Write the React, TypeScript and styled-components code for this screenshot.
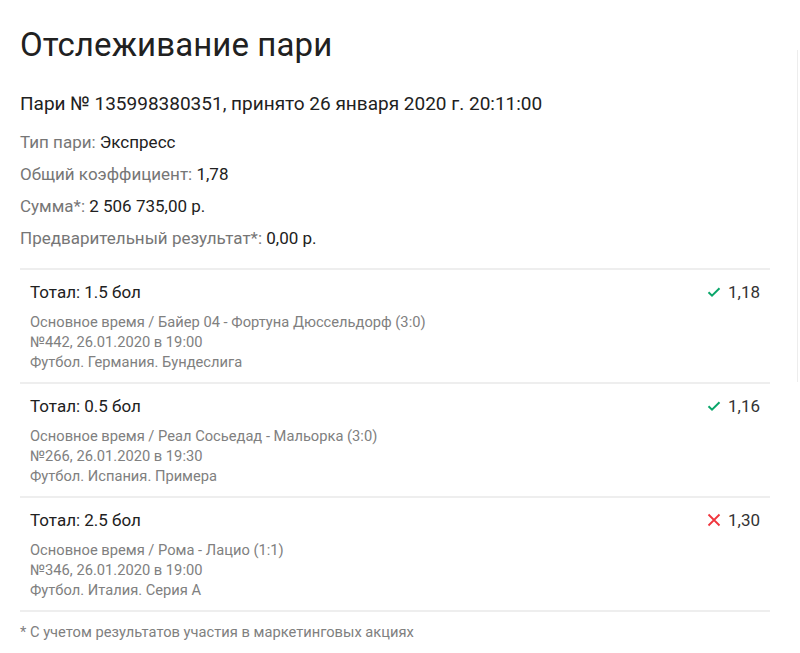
import styled, { createGlobalStyle } from 'styled-components'

const GlobalStyle = createGlobalStyle`
  body {
    margin: 0;
    background: #fff;
    font-family: Roboto, "Noto Sans", Arial, sans-serif;
    color: #212121;
  }
`

const Page = styled.div`
  display: flex;
  width: 800px;
  height: 653px;
  overflow: hidden;
`

const Content = styled.div`
  width: 752px;
  padding: 20px 0 0 20px;
`

const ScrollTrack = styled.div`
  width: 2px;
  margin: 50px 0 0 27px;
  height: 332px;
  border-left: 1px solid #ededed;
`

const Title = styled.h1`
  margin: 0;
  font-size: 33px;
  font-weight: 400;
  line-height: 50px;
  letter-spacing: 0.1px;
`

const BetNumber = styled.div`
  margin-top: 22px;
  font-size: 19px;
  line-height: 24px;
`

const Info = styled.div`
  margin-top: 10px;
  margin-bottom: 14px;
`

const InfoRow = styled.div`
  font-size: 17px;
  line-height: 32px;
  color: #212121;
`

const Label = styled.span`
  color: #767676;
`

const Event = styled.div`
  border-top: 2px solid #eee;
  padding: 10px;
`

const EventHead = styled.div`
  display: flex;
  justify-content: space-between;
  align-items: center;
`

const Market = styled.div`
  font-size: 17px;
  line-height: 24px;
`

const Odds = styled.div`
  display: flex;
  align-items: center;
  gap: 7px;
  font-size: 17px;
  line-height: 24px;
  color: #333;
`

const Details = styled.div`
  margin-top: 8px;
  font-size: 14.7px;
  line-height: 20px;
  color: #808080;
`

const Footnote = styled.div`
  border-top: 2px solid #eee;
  padding-top: 10px;
  font-size: 14.7px;
  line-height: 20px;
  color: #808080;
`

const Check = () => (
  <svg width="14" height="14" viewBox="0 0 14 14">
    <path d="M1.5 7.2 L5 10.6 L12.5 3.2" fill="none" stroke="#0aa66a" strokeWidth="2" />
  </svg>
)

const Cross = () => (
  <svg width="14" height="14" viewBox="0 0 14 14">
    <path d="M1.5 1.5 L12.5 12.5 M12.5 1.5 L1.5 12.5" fill="none" stroke="#f0353d" strokeWidth="1.8" />
  </svg>
)

type Outcome = {
  market: string
  odds: string
  won: boolean
  match: string
  when: string
  league: string
}

const outcomes: Outcome[] = [
  {
    market: 'Тотал: 1.5 бол',
    odds: '1,18',
    won: true,
    match: 'Основное время / Байер 04 - Фортуна Дюссельдорф (3:0)',
    when: '№442, 26.01.2020 в 19:00',
    league: 'Футбол. Германия. Бундеслига',
  },
  {
    market: 'Тотал: 0.5 бол',
    odds: '1,16',
    won: true,
    match: 'Основное время / Реал Сосьедад - Мальорка (3:0)',
    when: '№266, 26.01.2020 в 19:30',
    league: 'Футбол. Испания. Примера',
  },
  {
    market: 'Тотал: 2.5 бол',
    odds: '1,30',
    won: false,
    match: 'Основное время / Рома - Лацио (1:1)',
    when: '№346, 26.01.2020 в 19:00',
    league: 'Футбол. Италия. Серия А',
  },
]

export default function App() {
  return (
    <Page>
      <GlobalStyle />
      <Content>
        <Title>Отслеживание пари</Title>
        <BetNumber>Пари № 135998380351, принято 26 января 2020 г. 20:11:00</BetNumber>
        <Info>
          <InfoRow><Label>Тип пари:</Label> Экспресс</InfoRow>
          <InfoRow><Label>Общий коэффициент:</Label> 1,78</InfoRow>
          <InfoRow><Label>Сумма*:</Label> 2 506 735,00 р.</InfoRow>
          <InfoRow><Label>Предварительный результат*:</Label> 0,00 р.</InfoRow>
        </Info>
        {outcomes.map((o) => (
          <Event key={o.when}>
            <EventHead>
              <Market>{o.market}</Market>
              <Odds>
                {o.won ? <Check /> : <Cross />}
                {o.odds}
              </Odds>
            </EventHead>
            <Details>
              <div>{o.match}</div>
              <div>{o.when}</div>
              <div>{o.league}</div>
            </Details>
          </Event>
        ))}
        <Footnote>* С учетом результатов участия в маркетинговых акциях</Footnote>
      </Content>
      <ScrollTrack />
    </Page>
  )
}
